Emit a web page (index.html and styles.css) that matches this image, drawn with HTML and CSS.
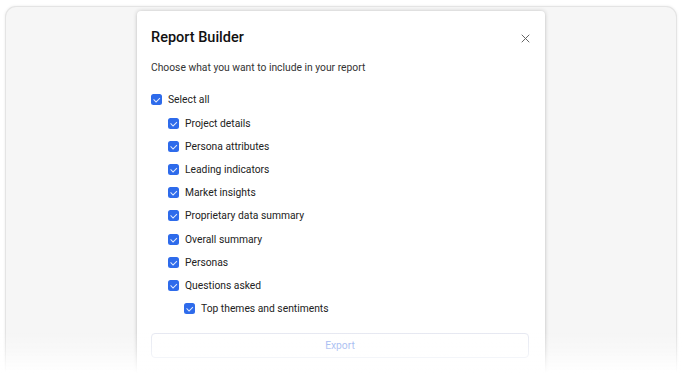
FILE: index.html
```html
<!DOCTYPE html>
<html lang="en">
<head>
    <meta charset="UTF-8">
    <meta name="viewport" content="width=device-width, initial-scale=1.0">
    <title>Report Builder</title>
    <link rel="stylesheet" href="styles.css">
</head>
<body>
    <div class="backdrop">
        <div class="modal">
            <div class="modal-header">
                <h2>Report Builder</h2>
                <button class="close" aria-label="Close">
                    <svg width="9" height="9" viewBox="0 0 9 9"><path d="M1 1L8 8M8 1L1 8" stroke="#666" stroke-width="1" stroke-linecap="round"/></svg>
                </button>
            </div>
            <p class="subtitle">Choose what you want to include in your report</p>
            <ul class="options">
                <li class="level-0"><span class="check"></span>Select all</li>
                <li class="level-1"><span class="check"></span>Project details</li>
                <li class="level-1"><span class="check"></span>Persona attributes</li>
                <li class="level-1"><span class="check"></span>Leading indicators</li>
                <li class="level-1"><span class="check"></span>Market insights</li>
                <li class="level-1"><span class="check"></span>Proprietary data summary</li>
                <li class="level-1"><span class="check"></span>Overall summary</li>
                <li class="level-1"><span class="check"></span>Personas</li>
                <li class="level-1"><span class="check"></span>Questions asked</li>
                <li class="level-2"><span class="check"></span>Top themes and sentiments</li>
            </ul>
            <button class="export" disabled>Export</button>
        </div>
    </div>
    <div class="fade"></div>
</body>
</html>
```

FILE: styles.css
```css
body {
    margin: 0;
    background: #fff;
    font-family: Roboto, "Noto Sans", sans-serif;
    color: #222;
    height: 383px;
    overflow: hidden;
}
.backdrop {
    margin: 6px 5px 0;
    height: 377px;
    background: #f6f6f6;
    border: 1px solid #e4e4e4;
    border-bottom: none;
    border-radius: 11px 11px 0 0;
    box-shadow: 0 0 3px rgba(0, 0, 0, 0.08);
    display: flex;
    justify-content: center;
    box-sizing: border-box;
    overflow: hidden;
}
.modal {
    width: 408px;
    margin-top: 4px;
    height: 380px;
    background: #fff;
    border-radius: 4px;
    box-shadow: 0 0 4px rgba(0, 0, 0, 0.2), 0 1px 2px rgba(0, 0, 0, 0.08);
    padding: 17px 16px 0 14px;
    box-sizing: border-box;
}
.modal-header {
    display: flex;
    justify-content: space-between;
    align-items: center;
    height: 20px;
}
.modal-header h2 {
    margin: 0;
    font-size: 14.5px;
    font-weight: 500;
    line-height: 20px;
    color: #111;
}
.close {
    border: none;
    background: none;
    padding: 0;
    margin-right: -1px;
    display: flex;
    cursor: pointer;
}
.subtitle {
    margin: 13px 0 0;
    font-size: 10.3px;
    line-height: 14px;
    color: #333;
}
.options {
    list-style: none;
    margin: 13.4px 0 0;
    padding: 0;
}
.options li {
    height: 23.2px;
    display: flex;
    align-items: center;
    font-size: 10.3px;
    color: #222;
}
.level-1 {
    padding-left: 17px;
}
.level-2 {
    padding-left: 33px;
}
.check {
    width: 11px;
    height: 11px;
    border-radius: 2.5px;
    background: #2e6beb;
    margin-right: 6px;
    position: relative;
    flex-shrink: 0;
}
.check::after {
    content: "";
    position: absolute;
    left: 3.5px;
    top: 2px;
    width: 2.5px;
    height: 4.5px;
    border: solid rgba(255, 255, 255, 0.85);
    border-width: 0 1px 1px 0;
    transform: rotate(45deg);
}
.export {
    margin-top: 12.6px;
    width: 100%;
    height: 25px;
    border: 1px solid #e6e9f2;
    border-radius: 4px;
    background: #fff;
    color: #94aff0;
    font-family: inherit;
    font-size: 10.3px;
}
.fade {
    position: fixed;
    left: 0;
    right: 0;
    bottom: 0;
    height: 52px;
    background: linear-gradient(to bottom, rgba(255, 255, 255, 0), rgba(255, 255, 255, 0.3) 35%, #fff 82%);
    pointer-events: none;
}
```
